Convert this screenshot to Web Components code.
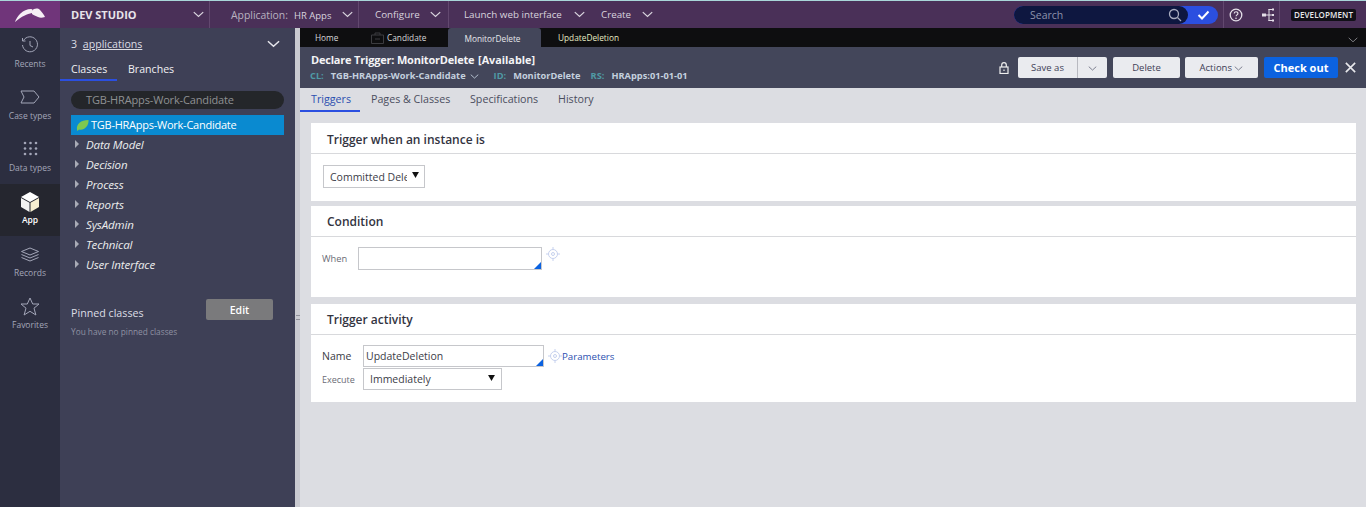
<!DOCTYPE html>
<html>
<head>
<meta charset="utf-8">
<title>Declare Trigger</title>
<style>
  html, body { margin: 0; padding: 0; height: 100%; overflow: hidden; }
  body { font-family: "Open Sans", "Liberation Sans", sans-serif; background: #dcdde2; }
</style>
</head>
<body>
<pega-app></pega-app>
<script>
const chev = (w, c, sw) => `<svg width="${w}" height="${Math.round(w * 0.6)}" viewBox="0 0 14 8" fill="none" stroke="${c}" stroke-width="${sw}"><path d="M1 1l6 5.5L13 1"/></svg>`;

class TopBar extends HTMLElement {
  constructor() {
    super();
    this.attachShadow({ mode: "open" }).innerHTML = `
    <style>
      :host { display: flex; height: 27px; background: #4a3058; border-top: 1px solid #a9d6d9; color: #d9d4de; font-size: 9.8px; align-items: stretch; }
      .logo { width: 60px; background: #70357a; display: flex; align-items: center; justify-content: center; padding-top: 1px; box-sizing: border-box; }
      .seg { display: flex; align-items: center; box-sizing: border-box; border-right: 1px solid #62486f; position: relative; }
      .seg.none { border-right: 0; }
      .brand { width: 150px; padding-left: 11px; font-weight: 700; color: #e8e4ea; font-size: 11px; justify-content: space-between; padding-right: 5px; }
      .app { width: 149px; padding-left: 21px; padding-right: 5px; justify-content: space-between; }
      .app b { font-weight: 400; font-size: 10.4px; color: #b9b2c0; }
      .app span { font-size: 9.5px; margin-left: 6px; }
      .cfg { width: 90px; padding-left: 16px; padding-right: 7px; justify-content: space-between; }
      .launch { padding-left: 15px; width: 136px; padding-right: 0; justify-content: space-between; }
      .create { padding-left: 16px; width: 68px; justify-content: space-between; }
      .fill { flex: 1; }
      .search { width: 204px; height: 18px; margin-top: 5px; border-radius: 9px; background: #2b4fe0; display: flex; margin-right: 5px; }
      .search .in { width: 174px; background: #0e1740; border-radius: 9px; color: #8d93ac; font-size: 10.5px; line-height: 18px; padding-left: 16px; box-sizing: border-box; display: flex; justify-content: space-between; align-items: center; padding-right: 6px; }
      .search .ok { flex: 1; display: flex; align-items: center; justify-content: center; }
      .tools { width: 57px; border-left: 1px solid #62486f; border-right: 1px solid #62486f; display: flex; align-items: center; gap: 18px; padding-left: 5px; box-sizing: border-box; }
      .env { width: 86px; display: flex; align-items: center; padding-left: 11px; box-sizing: border-box; }
      .env span { background: #111018; color: #e8e8ea; font-size: 8px; font-weight: 600; height: 12px; line-height: 12px; padding: 0 3px; border-radius: 2px; letter-spacing: .1px; }
    </style>
    <div class="logo">
      <svg width="32" height="15" viewBox="0 0 32 15" fill="#f6eef5"><path d="M1 14C3 8 9 1 17 1c2 0 2 2 1 4C13 6 8 8 1 14z"/><path d="M18 3c2-3 6-3 8-1 2 2 4 5 5 7-3 1-5 1-7 0-2-1-5-2-6-3z"/></svg>
    </div>
    <div class="seg brand"><span>DEV STUDIO</span>${chev(11, "#d9d4de", 1.6)}</div>
    <div class="seg app"><div><b>Application:</b><span>HR Apps</span></div>${chev(11, "#d9d4de", 1.6)}</div>
    <div class="seg cfg"><span>Configure</span>${chev(11, "#d9d4de", 1.6)}</div>
    <div class="seg none launch"><span>Launch web interface</span>${chev(11, "#d9d4de", 1.6)}</div>
    <div class="seg none create"><span>Create</span>${chev(11, "#d9d4de", 1.6)}</div>
    <div class="fill"></div>
    <div class="search">
      <div class="in"><span>Search</span><svg width="14" height="14" viewBox="0 0 14 14" fill="none" stroke="#a9adc0" stroke-width="1.300"><circle cx="6" cy="6" r="4.500"/><path d="M9.500 9.500l3.500 3.500"/></svg></div>
      <div class="ok"><svg width="13" height="10" viewBox="0 0 13 10" fill="none" stroke="#fff" stroke-width="2"><path d="M1.500 5l3.500 3.500 6.500-7"/></svg></div>
    </div>
    <div class="tools">
      <svg width="14" height="14" viewBox="0 0 14 14"><circle cx="7" cy="7" r="5.800" fill="none" stroke="#e4dfe8" stroke-width="1.300"/><path d="M5.200 5.500c.2-2.400 3.800-2.200 3.700 0 0 1.300-1.800 1.500-1.800 2.800" fill="none" stroke="#e4dfe8" stroke-width="1.200"/><circle cx="7" cy="10.200" r=".8" fill="#e4dfe8"/></svg>
      <svg width="14" height="14" viewBox="0 0 14 14" fill="#e4dfe8"><rect x="1" y="5.500" width="4" height="3"/><rect x="7.500" y="1" width="1" height="12"/><path d="M5 6.500h7v1H5z"/><rect x="7.500" y="1" width="5" height="1"/><rect x="7.500" y="12" width="5" height="1"/><rect x="11" y=".5" width="2" height="2"/><rect x="11" y="6" width="2" height="2"/><rect x="11" y="11.500" width="2" height="2"/></svg>
    </div>
    <div class="env"><span>DEVELOPMENT</span></div>`;
  }
}

class NavItem extends HTMLElement {
  constructor() {
    super();
    this.attachShadow({ mode: "open" }).innerHTML = `
    <style>
      :host { display: flex; flex-direction: column; align-items: center; height: 52px; box-sizing: border-box; padding-top: 6px; color: #a3a6b8; font-size: 8.5px; }
      :host([active]) { background: #25262f; color: #fff; font-weight: 600; }
      :host([low]) { padding-top: 8px; }
      .ic { height: 21px; display: flex; align-items: center; justify-content: center; margin-bottom: 3px; }
      :host([active]) .ic { height: 23px; margin-bottom: 1px; }
      :host([low]) .ic { margin-bottom: 2px; }
    </style>
    <div class="ic"><slot name="icon"></slot></div>
    <slot></slot>`;
  }
}

class SideNav extends HTMLElement {
  constructor() {
    super();
    this.attachShadow({ mode: "open" }).innerHTML = `
    <style>
      :host { display: block; width: 60px; flex: none; background: #2c2e40; box-sizing: border-box; }
      svg { display: block; }
    </style>
    <nav-item><svg slot="icon" width="18" height="18" viewBox="0 0 18 18" fill="none" stroke="#a3a6b8" stroke-width="1"><path d="M2.500 4.500A7.500 7.500 0 1 1 1.500 9"/><path d="M1.500 2v3h3M9 5v4.500l3 1.500"/></svg>Recents</nav-item>
    <nav-item><svg slot="icon" width="20" height="14" viewBox="0 0 20 14" fill="none" stroke="#a3a6b8" stroke-width="1"><path d="M1 1h13l5 6-5 6H1l3-6z"/></svg>Case types</nav-item>
    <nav-item><svg slot="icon" width="15" height="15" viewBox="0 0 15 15" fill="#a3a6b8"><circle cx="2" cy="2" r="1.300"/><circle cx="7.500" cy="2" r="1.300"/><circle cx="13" cy="2" r="1.300"/><circle cx="2" cy="7.500" r="1.300"/><circle cx="7.500" cy="7.500" r="1.300"/><circle cx="13" cy="7.500" r="1.300"/><circle cx="2" cy="13" r="1.300"/><circle cx="7.500" cy="13" r="1.300"/><circle cx="13" cy="13" r="1.300"/></svg>Data types</nav-item>
    <nav-item active><svg slot="icon" width="20" height="20" viewBox="0 0 20 20"><path fill="#fff" d="M10 0l9 5-9 5-9-5z"/><path fill="#f2f2f2" d="M1 6l8.500 4.800V20L1 15z"/><path fill="#f6eed0" d="M19 6l-8.500 4.800V20l8.500-5z"/></svg>App</nav-item>
    <nav-item low><svg slot="icon" width="20" height="15" viewBox="0 0 20 15" fill="none" stroke="#a3a6b8" stroke-width="1"><path d="M10 1l8.500 3.500L10 8 1.500 4.500z"/><path d="M1.500 7.500L10 11l8.500-3.500M1.500 10.500L10 14l8.500-3.500"/></svg>Records</nav-item>
    <nav-item low><svg slot="icon" width="20" height="19" viewBox="0 0 20 19" fill="none" stroke="#a3a6b8" stroke-width="1"><path d="M10 1l2.700 6h6.300l-5 4.200 1.900 6.800L10 14.300 4.100 18 6 11.200 1 7h6.300z"/></svg>Favorites</nav-item>`;
  }
}

class TreeRow extends HTMLElement {
  constructor() {
    super();
    this.attachShadow({ mode: "open" }).innerHTML = `
    <style>
      :host { display: flex; align-items: center; height: 20px; box-sizing: border-box; padding: 0 0 2px 5px; color: #eceded; font-size: 11.5px; font-style: italic; font-weight: 400; letter-spacing: -.13px; }
      i { width: 0; height: 0; border-left: 4px solid #a9abb6; border-top: 4px solid transparent; border-bottom: 4px solid transparent; margin-right: 7px; margin-left: -1px; }
    </style>
    <i></i><slot></slot>`;
  }
}

class ExplorerPanel extends HTMLElement {
  constructor() {
    super();
    this.attachShadow({ mode: "open" }).innerHTML = `
    <style>
      :host { display: block; width: 235px; flex: none; background: #3e4056; color: #dcdde4; font-size: 10.6px; box-sizing: border-box; }
      .head { display: flex; justify-content: space-between; align-items: center; height: 31px; padding: 0 15px 0 11px; }
      .head u { margin-left: 3px; }
      .tabs { display: flex; height: 22px; }
      .tabs div { color: #f0f0f3; box-sizing: border-box; padding-top: 3px; }
      .tabs .on { width: 57px; padding-left: 11px; border-bottom: 2px solid #2b4fe0; }
      .tabs .off { padding-left: 11px; }
      .body { padding: 10px 11px 0 11px; }
      .filter { height: 18px; border-radius: 9px; background: #24262a; color: #8f9193; line-height: 18px; padding-left: 15px; font-size: 11px; letter-spacing: -.15px; }
      .sel { margin-top: 6px; height: 20px; box-sizing: border-box; padding: 0 0 2px 5px; background: #0a8ad0; color: #fff; display: flex; align-items: center; gap: 2px; letter-spacing: -.25px; font-size: 11px; }
      .pin { display: flex; justify-content: space-between; margin-top: 24px; padding-right: 11px; height: 21px; }
      .pin span { margin-top: 7px; font-size: 10.7px; }
      .pin button { width: 67px; height: 21px; background: #7a7a7c; border: 0; border-radius: 2px; color: #fff; font: 600 10.5px "Open Sans", sans-serif; padding: 0; }
      .none { font-size: 8.3px; color: #8f91a2; margin-top: 6px; }
    </style>
    <div class="head"><span>3 <u>applications</u></span>${chev(13, "#e6e6ec", 1.6)}</div>
    <div class="tabs"><div class="on">Classes</div><div class="off">Branches</div></div>
    <div class="body">
      <div class="filter">TGB-HRApps-Work-Candidate</div>
      <div class="sel"><svg width="13" height="12" viewBox="0 0 13 12" style="margin-top:2px"><path fill="#7ec850" d="M1 11C0 5 5 1 12.500 1 13 7 8 12 3 10.500L1.500 12z"/></svg>TGB-HRApps-Work-Candidate</div>
      <tree-row>Data Model</tree-row>
      <tree-row>Decision</tree-row>
      <tree-row>Process</tree-row>
      <tree-row>Reports</tree-row>
      <tree-row>SysAdmin</tree-row>
      <tree-row>Technical</tree-row>
      <tree-row>User Interface</tree-row>
      <div class="pin"><span>Pinned classes</span><button>Edit</button></div>
      <div class="none">You have no pinned classes</div>
    </div>`;
  }
}

class WorkTabs extends HTMLElement {
  constructor() {
    super();
    this.attachShadow({ mode: "open" }).innerHTML = `
    <style>
      :host { display: flex; height: 19px; background: #0e0e10; color: #d8d8da; font-size: 8.3px; align-items: stretch; position: relative; }
      div { display: flex; align-items: center; box-sizing: border-box; }
      .home { width: 71px; padding-left: 15px; }
      .cand { width: 77px; padding-left: 0; gap: 3px; }
      .mon { width: 93px; background: #43465a; border-radius: 3px 3px 0 0; justify-content: center; color: #e6e6ea; padding: 2px 4px 0 0; }
      .upd { padding-left: 17px; color: #e7ecc4; }
      .end { position: absolute; right: 8px; top: 6px; }
    </style>
    <div class="home">Home</div>
    <div class="cand"><svg width="13" height="12" viewBox="0 0 13 12" fill="none" stroke="#3c3c40"><path d="M.5 3h12v8.500H.5zM4 3V1h5v2M4 7h5"/></svg>Candidate</div>
    <div class="mon">MonitorDelete</div>
    <div class="upd">UpdateDeletion</div>
    <span class="end">${chev(10, "#8d8d92", 1.2)}</span>`;
  }
}

class RuleHeader extends HTMLElement {
  constructor() {
    super();
    this.attachShadow({ mode: "open" }).innerHTML = `
    <style>
      :host { display: flex; height: 41px; background: #43465a; justify-content: space-between; box-sizing: border-box; padding: 6px 10px 0 11px; }
      h1 { margin: 0; font-size: 11px; line-height: 13px; color: #f4f4f6; font-weight: 700; letter-spacing: -.2px; }
      h1 span { margin-left: 1px; letter-spacing: 0; font-size: 10.8px; }
      .meta { display: flex; font-size: 9.25px; font-weight: 700; margin-top: 4px; color: #c3d0de; align-items: center; line-height: 12px; margin-left: -1px; }
      .meta em { font-style: normal; color: #4f9aa5; margin-right: 7px; }
      .meta svg { margin: 0 15px 0 4px; }
      .meta .g { margin-right: 10px; }
      .acts { display: flex; align-items: flex-start; margin-top: 4px; }
      button { height: 21px; border: 0; border-radius: 2px; background: #eaebef; color: #3e4056; font: 400 9.500px "Open Sans", sans-serif; padding: 0; }
      .lock { margin: 5px 9px 0 0; }
      .save { width: 60px; border-radius: 2px 0 0 2px; border-right: 1px solid #b8b9c0; }
      .drop { width: 29px; border-radius: 0 2px 2px 0; margin-right: 6px; }
      .del { width: 67px; margin-right: 5px; }
      .act { width: 73px; margin-right: 6px; }
      .out { width: 74px; background: #0b62e0; color: #fff; font-weight: 700; font-size: 11px; }
      .x { margin: 5px 0 0 7px; }
    </style>
    <div>
      <h1>Declare Trigger: MonitorDelete <span>[Available]</span></h1>
      <div class="meta"><em>CL:</em>TGB-HRApps-Work-Candidate ${chev(9, "#c3d0de", 1.4)}<em>ID:</em><span class="g">MonitorDelete</span><em>RS:</em>HRApps:01-01-01</div>
    </div>
    <div class="acts">
      <svg class="lock" width="10" height="12" viewBox="0 0 10 12" fill="none" stroke="#eee" stroke-width="1.200"><rect x="1" y="5" width="8" height="6.500"/><path d="M2.700 5V3a2.300 2.300 0 0 1 4.600 0v2"/><path d="M5 7.500v1.500"/></svg>
      <button class="save">Save as</button><button class="drop">${chev(9, "#5a5c70", 1.2)}</button>
      <button class="del">Delete</button>
      <button class="act">Actions ${chev(9, "#5a5c70", 1.2)}</button>
      <button class="out">Check out</button>
      <svg class="x" width="11" height="11" viewBox="0 0 13 13" stroke="#e8e8ec" stroke-width="1.900"><path d="M1 1l11 11M12 1L1 12"/></svg>
    </div>`;
  }
}

class SubTabs extends HTMLElement {
  constructor() {
    super();
    this.attachShadow({ mode: "open" }).innerHTML = `
    <style>
      :host { display: flex; height: 24px; font-size: 10.7px; color: #4b4d5e; }
      div { box-sizing: border-box; padding-top: 4px; }
      .on { width: 60px; padding-left: 11px; color: #2b4fb0; border-bottom: 2px solid #2b4fe0; }
      .a { margin-left: 11px; width: 99px; }
      .b { width: 88px; }
    </style>
    <div class="on">Triggers</div><div class="a">Pages &amp; Classes</div><div class="b">Specifications</div><div>History</div>`;
  }
}

class FormCard extends HTMLElement {
  constructor() {
    super();
    this.attachShadow({ mode: "open" }).innerHTML = `
    <style>
      :host { display: block; background: #fff; margin-left: 11px; margin-right: 10px; }
      h2 { margin: 0; height: 31px; box-sizing: border-box; border-bottom: 1px solid #d8d9dc; font-size: 12px; font-weight: 600; color: #33343f; padding: 9px 0 0 16px; line-height: 15px; }
      :host([tight]) h2 { padding-top: 8px; }
    </style>
    <h2><slot name="title"></slot></h2>
    <div><slot></slot></div>`;
  }
}

// target icon shared by the autocomplete fields
const target = `<svg width="14" height="14" viewBox="0 0 14 14" fill="none" stroke="#c6d1ee"><circle cx="7" cy="7" r="4.500"/><circle cx="7" cy="7" r="1.500"/><path d="M7 0v2.500M7 11.500V14M0 7h2.500M11.500 7H14"/></svg>`;

class FieldBox extends HTMLElement {
  constructor() {
    super();
    this.attachShadow({ mode: "open" }).innerHTML = `
    <style>
      :host { display: flex; align-items: center; box-sizing: border-box; height: 23px; border: 1px solid #c6c7cb; font-size: 10.500px; color: #3c3d48; position: relative; background: #fff; padding-left: 6px; overflow: hidden; white-space: nowrap; }
      .corner { position: absolute; right: 0; bottom: 0; width: 0; height: 0; border-left: 7px solid transparent; border-bottom: 7px solid #0b62e0; display: none; }
      :host([auto]) .corner { display: block; }
      .arrow { position: absolute; right: 0; top: 0; bottom: 0; width: var(--arrow-w, 17px); background: #fff; display: none; align-items: center; justify-content: center; padding-bottom: 3px; box-sizing: border-box; }
      :host([select]) .arrow { display: flex; }
    </style>
    <slot></slot><span class="corner"></span><span class="arrow"><svg width="7" height="6" viewBox="0 0 8 7"><path d="M0 0h8L4 7z" fill="#111"/></svg></span>`;
  }
}

class WorkArea extends HTMLElement {
  constructor() {
    super();
    this.attachShadow({ mode: "open" }).innerHTML = `
    <style>
      :host { display: block; flex: 1; min-width: 0; background: #dcdde2; }
      .cards { padding-top: 11px; display: flex; flex-direction: column; }
      .p1 { height: 47px; padding: 11px 0 0 12px; box-sizing: border-box; }
      .p2 { height: 60px; padding: 10px 0 0 11px; box-sizing: border-box; display: flex; align-items: flex-start; font-size: 9.3px; color: #6b6c75; }
      .p3 { height: 67px; padding: 10px 0 0 11px; box-sizing: border-box; }
      .row { display: flex; align-items: center; }
      .lab { font-size: 10.5px; color: #3a3b45; width: 41px; }
      .lab.sm { font-size: 9px; color: #6b6c75; }
      .when { width: 26px; line-height: 23px; margin-right: 10px; }
      .tgt { margin-left: 4px; display: flex; }
      a { color: #2b4fb0; font-size: 9.7px; }
      .r2 { margin-top: 1px; }
    </style>
    <work-tabs></work-tabs>
    <rule-header></rule-header>
    <sub-tabs></sub-tabs>
    <div class="cards">
      <form-card style="margin-bottom:5px">
        <span slot="title">Trigger when an instance is</span>
        <div class="p1"><field-box select style="width:102px">Committed Dele</field-box></div>
      </form-card>
      <form-card tight style="margin-bottom:7px">
        <span slot="title">Condition</span>
        <div class="p2"><span class="when">When</span><field-box auto style="width:184px"></field-box><span class="tgt">${target}</span></div>
      </form-card>
      <form-card tight>
        <span slot="title">Trigger activity</span>
        <div class="p3">
          <div class="row"><span class="lab">Name</span><field-box auto style="width:181px;height:22px;padding-left:2px">UpdateDeletion</field-box><span class="tgt">${target}</span><a>Parameters</a></div>
          <div class="row r2"><span class="lab sm">Execute</span><field-box select style="width:139px;height:22px;--arrow-w:19px">Immediately</field-box></div>
        </div>
      </form-card>
    </div>`;
  }
}

class PegaApp extends HTMLElement {
  constructor() {
    super();
    this.attachShadow({ mode: "open" }).innerHTML = `
    <style>
      :host { display: flex; flex-direction: column; height: 507px; width: 1366px; overflow: hidden; }
      .row { display: flex; flex: 1; min-height: 0; }
      .split { width: 5px; flex: none; background: #c9cad0; display: flex; justify-content: center; padding-top: 287px; box-sizing: border-box; }
      .split i { width: 4px; height: 3px; border-top: 1px solid #8f909a; border-bottom: 1px solid #8f909a; }
    </style>
    <top-bar></top-bar>
    <div class="row">
      <side-nav></side-nav>
      <explorer-panel></explorer-panel>
      <div class="split"><i></i></div>
      <work-area></work-area>
    </div>`;
  }
}

customElements.define("top-bar", TopBar);
customElements.define("nav-item", NavItem);
customElements.define("side-nav", SideNav);
customElements.define("tree-row", TreeRow);
customElements.define("explorer-panel", ExplorerPanel);
customElements.define("work-tabs", WorkTabs);
customElements.define("rule-header", RuleHeader);
customElements.define("sub-tabs", SubTabs);
customElements.define("form-card", FormCard);
customElements.define("field-box", FieldBox);
customElements.define("work-area", WorkArea);
customElements.define("pega-app", PegaApp);
</script>
</body>
</html>
